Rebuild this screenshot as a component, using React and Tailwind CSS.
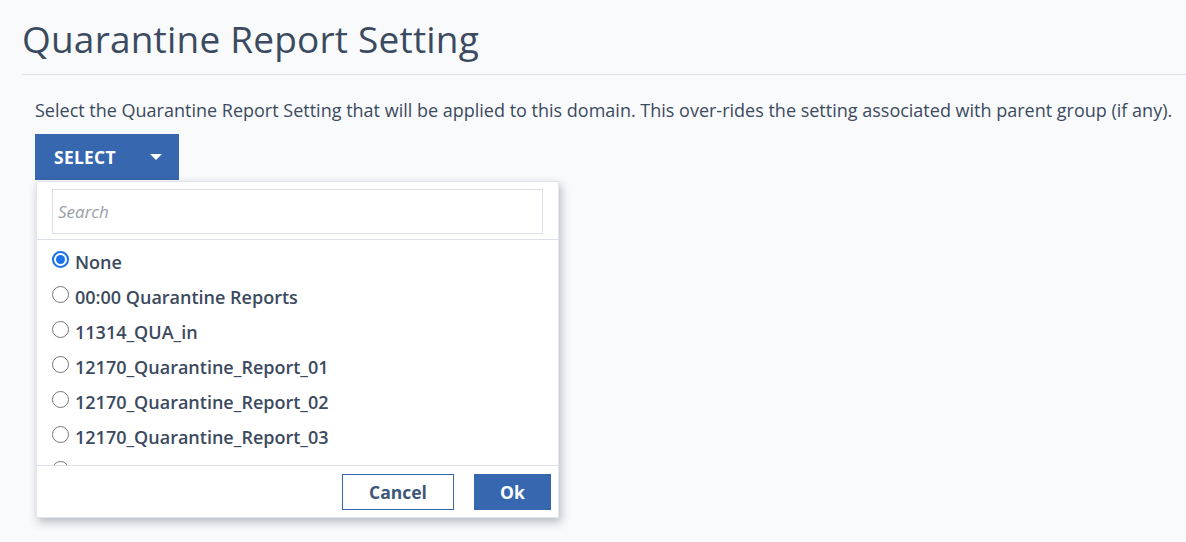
import React, { useState } from "react";

const OPTIONS = [
  "None",
  "00:00 Quarantine Reports",
  "11314_QUA_in",
  "12170_Quarantine_Report_01",
  "12170_Quarantine_Report_02",
  "12170_Quarantine_Report_03",
  "12170_Quarantine_Report_04",
];

function Radio({ checked }) {
  return checked ? (
    <span className="mt-[2px] flex h-[17px] w-[17px] shrink-0 items-center justify-center rounded-full border-2 border-[#1a73e8] bg-white">
      <span className="h-[9px] w-[9px] rounded-full bg-[#1a73e8]" />
    </span>
  ) : (
    <span className="mt-[2px] h-[17px] w-[17px] shrink-0 rounded-full border border-[#767676] bg-white" />
  );
}

export default function App() {
  const [selected, setSelected] = useState("None");

  return (
    <div className="min-h-[542px] w-[1186px] bg-[#f9fafc] font-['Open_Sans',sans-serif] text-[#3b4a5e]">
      {/* Header */}
      <div className="pl-[22px] pt-[14px]">
        <h1 className="text-[37px] leading-[50px] tracking-[0.2px]">Quarantine Report Setting</h1>
        <div className="mt-[10px] h-px bg-[#dfe2ea]" />
      </div>

      <div className="pl-[35px] pt-[22px]">
        <p className="text-[18px] leading-[26px]">
          Select the Quarantine Report Setting that will be applied to this domain. This over-rides the setting associated with parent group (if any).
        </p>

        {/* Select button */}
        <button className="mt-[11px] flex h-[46px] w-[144px] items-center bg-[#3767af] pl-[19px] text-white">
          <span className="text-[17.4px] font-bold tracking-[0.3px]">SELECT</span>
          <svg className="ml-[34px]" width="12" height="6" viewBox="0 0 12 6">
            <path d="M0 0h12L6 6z" fill="#fff" />
          </svg>
        </button>

        {/* Dropdown */}
        <div className="ml-px mt-px w-[523px] border border-[#e3e5ec] bg-white shadow-[2px_4px_9px_rgba(40,50,70,0.32)]">
          <div className="px-[15px] pb-[5px] pt-[7px]">
            <div className="flex h-[45px] items-center border border-[#dcdfe8] px-[5px]">
              <span className="text-[17px] italic text-[#9aa0aa]">Search</span>
            </div>
          </div>
          <div className="h-px bg-[#dcdfe8]" />

          <div className="h-[225px] overflow-hidden pt-[4px]">
            {OPTIONS.map((o) => (
              <label
                key={o}
                onClick={() => setSelected(o)}
                className="flex h-[35px] cursor-pointer items-start gap-[6px] pl-[15px] pt-[5px]"
              >
                <Radio checked={selected === o} />
                <span className="text-[18px] font-semibold leading-[26px]">{o}</span>
              </label>
            ))}
          </div>

          <div className="h-px bg-[#dcdfe8]" />
          <div className="flex justify-end gap-[20px] px-[7px] pb-[7px] pt-[8px]">
            <button className="h-[36px] w-[112px] border border-[#3767af] bg-white text-[17.5px] font-bold text-[#3e5779]">
              Cancel
            </button>
            <button className="h-[36px] w-[77px] bg-[#3767af] text-[17.5px] font-bold text-white">
              Ok
            </button>
          </div>
        </div>
      </div>
    </div>
  );
}
